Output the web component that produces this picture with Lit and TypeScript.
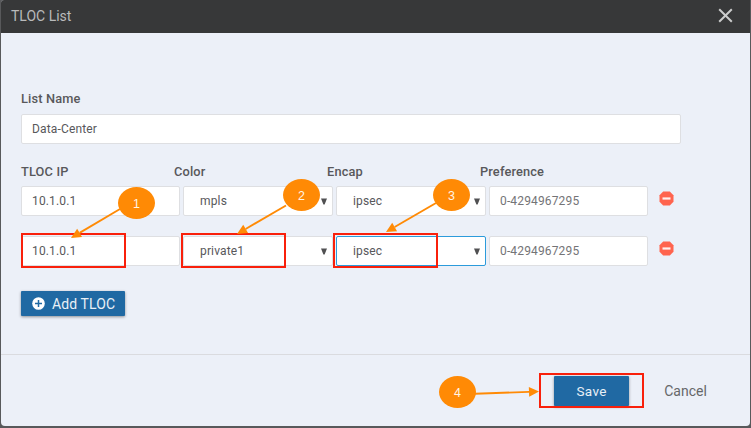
import { LitElement, html, svg, css } from "lit";
import { customElement } from "lit/decorators.js";
import { classMap } from "lit/directives/class-map.js";

interface Tloc { ip: string; color: string; encap: string; focus: boolean; }

@customElement("app-root")
export class AppRoot extends LitElement {
  static styles = css`
    :host { display: block; position: relative; width: 751px; height: 428px; overflow: hidden; background: #58595b; font-family: Roboto, "Liberation Sans", sans-serif; color: #58585b; }
    * { box-sizing: border-box; }
    .dialog { display: flex; flex-direction: column; height: 426px; margin: 0 1px; background: #ecf0f8; border-radius: 3px 0 4px 4px; overflow: hidden; }
    .header { height: 33px; flex: none; background: #373839; color: #b9babb; display: flex; align-items: center; justify-content: space-between; padding: 0 17px 2px 10px; font-size: 14px; letter-spacing: 0; }
    .close { width: 15px; height: 15px; display: block; }
    .body { height: 321px; padding: 57px 20px 0; flex: none; }
    .label { font-size: 12.8px; font-weight: 500; line-height: 18px; height: 18px; letter-spacing: 0.15px; }
    .field { height: 30px; background: #fff; border: 1px solid #dedfe2; border-radius: 2px; display: flex; align-items: center; padding-left: 10px; font-size: 12px; letter-spacing: 0.15px; }
    .name { width: 660px; margin-top: 6px; }
    .labels { display: grid; grid-template-columns: 153px 153px 153px 1fr; margin-top: 19px; }
    .row { display: flex; gap: 3px; margin-top: 5px; align-items: flex-start; }
    .row + .row { margin-top: 20px; }
    .wide { width: 159px; }
    .select { width: 150px; padding: 0 5px 0 16px; justify-content: space-between; }
    .focus { border-color: #2c9bdb; }
    .hint { color: #747477; }
    .caret { width: 6px; height: 7px; display: block; }
    .remove { width: 15px; height: 15px; display: block; margin: 5px 0 0 7.5px; }
    .btn { background: #2069a3; color: #e9f0f6; display: flex; align-items: center; border-radius: 1px; box-shadow: 0 1px 3px rgba(0,0,0,.4); }
    .add { width: 104px; height: 25px; margin-top: 25px; padding-left: 11px; font-size: 14px; letter-spacing: 0.1px; gap: 7px; }
    .plus { width: 13px; height: 13px; display: block; }
    .footer { flex: 1; border-top: 1px solid #dadbdf; display: flex; justify-content: flex-end; padding: 21px 43px 0 0; gap: 35px; }
    .save { width: 75px; height: 30px; justify-content: center; font-size: 13.5px; letter-spacing: 0.4px; }
    .cancel { font-size: 14px; line-height: 30px; height: 30px; letter-spacing: 0.03px; color: #666769; }
    .marks { position: absolute; inset: 0; width: 751px; height: 428px; pointer-events: none; }
    .box { fill: none; stroke: #f9200b; stroke-width: 2; }
    .line { stroke: #ff8a05; stroke-width: 1.9; }
    .orange { fill: #ff8a05; }
    .num { fill: #fff4e5; font-size: 12.5px; text-anchor: middle; font-family: "Liberation Sans", sans-serif; }
  `;

  private rows: Tloc[] = [
    { ip: "10.1.0.1", color: "mpls", encap: "ipsec", focus: false },
    { ip: "10.1.0.1", color: "private1", encap: "ipsec", focus: true },
  ];

  private boxes = [[22, 234], [182, 234], [334, 234], [540, 374]];

  private steps = [
    { n: 1, cx: 136.5, cy: 203, x1: 120, y1: 209, x2: 71, y2: 238 },
    { n: 2, cx: 301.5, cy: 195, x1: 286, y1: 205.5, x2: 237, y2: 234 },
    { n: 3, cx: 451.5, cy: 195, x1: 436, y1: 203, x2: 386, y2: 232 },
    { n: 4, cx: 457.5, cy: 392, x1: 475, y1: 393.8, x2: 539, y2: 391.5 },
  ];

  private select(value: string, focus = false) {
    return html`<div class=${classMap({ field: true, select: true, focus })}>
      <span>${value}</span>
      <svg class="caret" viewBox="0 0 6 7"><path d="M0 .5h6L3.6 6.5H2.4z" fill="#505052" /></svg>
    </div>`;
  }

  private row(r: Tloc) {
    return html`<div class="row">
      <div class="field wide">${r.ip}</div>
      ${this.select(r.color)} ${this.select(r.encap, r.focus)}
      <div class="field wide hint">0-4294967295</div>
      <svg class="remove" viewBox="0 0 15 15">
        <path d="M4.2.5h6.6l3.7 3.7v6.6l-3.7 3.7H4.2L.5 10.8V4.2z" fill="#ff644e" />
        <rect x="3.5" y="6.4" width="8" height="2.2" fill="#fff1ee" />
      </svg>
    </div>`;
  }

  private step(s: AppRoot["steps"][number]) {
    const len = Math.hypot(s.x2 - s.x1, s.y2 - s.y1);
    const ux = (s.x2 - s.x1) / len, uy = (s.y2 - s.y1) / len;
    const bx = s.x2 - ux * 10, by = s.y2 - uy * 10;
    return svg`
      <line class="line" x1=${s.x1} y1=${s.y1} x2=${bx} y2=${by} />
      <polygon class="orange" points="${s.x2},${s.y2} ${bx - uy * 4.8},${by + ux * 4.8} ${bx + uy * 4.8},${by - ux * 4.8}" />
      <ellipse class="orange" cx=${s.cx} cy=${s.cy} rx="18.5" ry="16" />
      <text class="num" x=${s.cx} y=${s.cy + 5}>${s.n}</text>`;
  }

  render() {
    return html`
      <div class="dialog">
        <div class="header">
          <span>TLOC List</span>
          <svg class="close" viewBox="0 0 15 15"><path d="M1.2 1.2l12.6 12.6M13.8 1.2L1.2 13.8" stroke="#cbcccc" stroke-width="2" /></svg>
        </div>
        <div class="body">
          <div class="label">List Name</div>
          <div class="field name">Data-Center</div>
          <div class="labels">
            ${["TLOC IP", "Color", "Encap", "Preference"].map((t) => html`<div class="label">${t}</div>`)}
          </div>
          ${this.rows.map((r) => this.row(r))}
          <div class="btn add">
            <svg class="plus" viewBox="0 0 13 13"><circle cx="6.5" cy="6.5" r="6.3" fill="#fff" /><path d="M6.5 3v7M3 6.5h7" stroke="#2069a3" stroke-width="1.5" /></svg>
            <span>Add TLOC</span>
          </div>
        </div>
        <div class="footer">
          <div class="btn save">Save</div>
          <div class="cancel">Cancel</div>
        </div>
      </div>
      <svg class="marks" viewBox="0 0 751 428">
        ${this.boxes.map(([x, y]) => svg`<rect class="box" x=${x} y=${y} width="103" height="33" />`)}
        ${this.steps.map((s) => this.step(s))}
      </svg>`;
  }
}
